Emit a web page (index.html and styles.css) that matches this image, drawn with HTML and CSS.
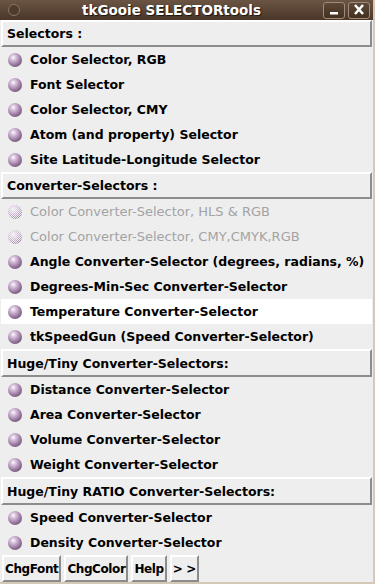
FILE: index.html
```html
<!DOCTYPE html>
<html lang="en">
<head>
  <meta charset="UTF-8">
  <title>tkGooie SELECTORtools</title>
  <link rel="stylesheet" href="styles.css">
</head>
<body>
  <div class="window">
    <div class="titlebar">
      <span class="win-dot"></span>
      <span class="win-title">tkGooie SELECTORtools</span>
      <span class="win-btns">
        <span class="win-btn"><svg width="18" height="16" viewBox="0 0 18 16"><rect x="5" y="10" width="8" height="2.5" fill="#fff"/></svg></span>
        <span class="win-btn"><svg width="18" height="16" viewBox="0 0 18 16"><path d="M5 3 L13 12 M13 3 L5 12" stroke="#fff" stroke-width="2.6"/></svg></span>
      </span>
    </div>

    <div class="content">
      <div class="group-head">Selectors :</div>
      <div class="item"><span class="ball"></span>Color Selector, RGB</div>
      <div class="item"><span class="ball"></span>Font Selector</div>
      <div class="item"><span class="ball"></span>Color Selector, CMY</div>
      <div class="item"><span class="ball"></span>Atom (and property) Selector</div>
      <div class="item"><span class="ball"></span>Site Latitude-Longitude Selector</div>

      <div class="group-head">Converter-Selectors :</div>
      <div class="item disabled"><span class="ball"></span>Color Converter-Selector, HLS &amp; RGB</div>
      <div class="item disabled"><span class="ball"></span>Color Converter-Selector, CMY,CMYK,RGB</div>
      <div class="item"><span class="ball"></span>Angle Converter-Selector (degrees, radians, %)</div>
      <div class="item"><span class="ball"></span>Degrees-Min-Sec Converter-Selector</div>
      <div class="item active"><span class="ball"></span>Temperature Converter-Selector</div>
      <div class="item"><span class="ball"></span>tkSpeedGun (Speed Converter-Selector)</div>

      <div class="group-head tall">Huge/Tiny Converter-Selectors:</div>
      <div class="item"><span class="ball"></span>Distance Converter-Selector</div>
      <div class="item"><span class="ball"></span>Area Converter-Selector</div>
      <div class="item"><span class="ball"></span>Volume Converter-Selector</div>
      <div class="item"><span class="ball"></span>Weight Converter-Selector</div>

      <div class="group-head tall">Huge/Tiny RATIO Converter-Selectors:</div>
      <div class="item"><span class="ball"></span>Speed Converter-Selector</div>
      <div class="item"><span class="ball"></span>Density Converter-Selector</div>

      <div class="toolbar">
        <button class="tool-btn">ChgFont</button>
        <button class="tool-btn">ChgColor</button>
        <button class="tool-btn">Help</button>
        <button class="tool-btn">&gt; &gt;</button>
      </div>
    </div>
  </div>
</body>
</html>
```

FILE: styles.css
```css
/* General */
* {
  margin: 0;
  padding: 0;
  box-sizing: border-box;
}

body {
  width: 375px;
  height: 584px;
  overflow: hidden;
  background: #3b2a1e;
  font-family: 'DejaVu Sans', sans-serif;
}

.window {
  width: 375px;
  height: 584px;
  display: flex;
  flex-direction: column;
  border-right: 2px solid #d6c8b8;
  border-bottom: 2px solid #d6c8b8;
  background: #eeeeee;
}

/* Title bar */
.titlebar {
  height: 20px;
  display: flex;
  align-items: center;
  padding: 0 3px 0 8px;
  background: linear-gradient(#6b5443, #4a372a);
}

.win-dot {
  width: 12px;
  height: 12px;
  border-radius: 50%;
  border: 1px solid #8a7564;
  background: #4e3b2e;
}

.win-title {
  flex: 1;
  text-align: center;
  color: #fff;
  font-weight: bold;
  font-size: 13.5px;
  text-shadow: 1px 1px 1px #1e140c;
}

.win-btns {
  display: flex;
  gap: 3px;
}

.win-btn {
  width: 22px;
  height: 17px;
  border: 1px solid #a08b7a;
  border-radius: 3px;
  background: linear-gradient(#5e4837, #43301f);
  display: flex;
  align-items: center;
  justify-content: center;
}

/* Content */
.content {
  flex: 1;
  padding: 0 1px;
  display: flex;
  flex-direction: column;
}

.group-head {
  height: 27px;
  display: flex;
  align-items: center;
  padding-left: 4px;
  font-size: 12.5px;
  font-weight: bold;
  color: #000;
  white-space: nowrap;
  background: #eeeeee;
  border: 2px solid;
  border-color: #ffffff #8c8c8c #8c8c8c #ffffff;
}

.group-head.tall {
  height: 28px;
}

.item {
  height: 25px;
  display: flex;
  align-items: center;
  padding-left: 7px;
  font-size: 12.5px;
  font-weight: bold;
  color: #000;
  white-space: nowrap;
}

.item.active {
  background: #ffffff;
}

.item.disabled {
  color: #a3a3a3;
  font-weight: normal;
  font-size: 13px;
}

.ball {
  flex: none;
  width: 14px;
  height: 14px;
  margin-right: 8px;
  border-radius: 50%;
  background: radial-gradient(circle at 38% 32%, #ffffff 0, #e0cbe4 16%, #a282a8 52%, #4c3252 100%);
}

.item.disabled .ball {
  background:
    repeating-conic-gradient(#eeeeee 0 25%, transparent 0 50%) 0 0 / 2px 2px,
    radial-gradient(circle at 38% 32%, #ffffff 0, #e6d4ea 20%, #b79bbc 60%, #6e5272 100%);
}

/* Bottom buttons */
.toolbar {
  display: flex;
  gap: 3px;
  padding: 0 1px;
}

.tool-btn {
  height: 27px;
  padding: 0 1px;
  font-family: 'DejaVu Sans', sans-serif;
  font-size: 12px;
  font-weight: bold;
  letter-spacing: -0.4px;
  color: #000;
  background: #eeeeee;
  border: 2px solid;
  border-color: #ffffff #8c8c8c #8c8c8c #ffffff;
}
```
